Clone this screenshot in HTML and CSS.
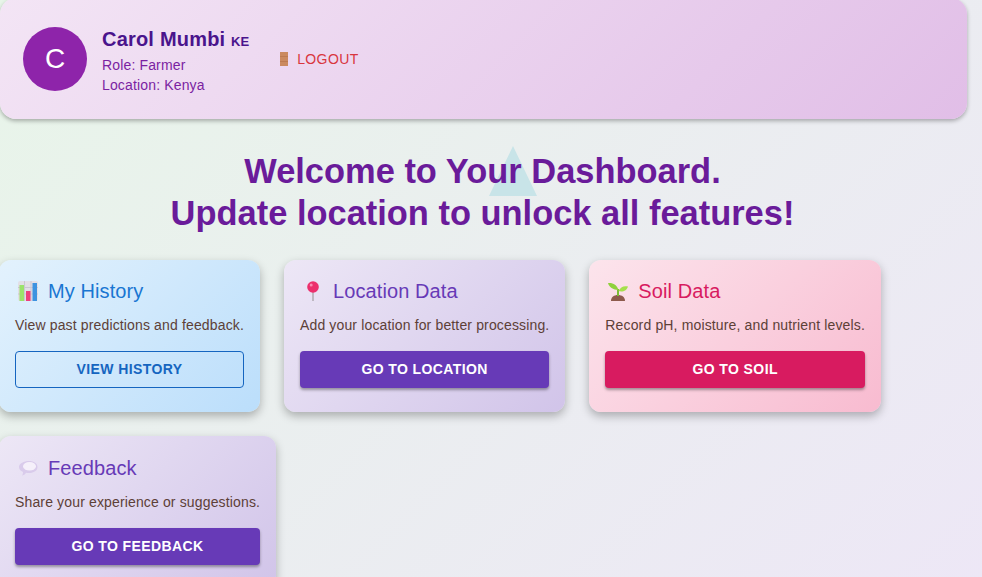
FILE: index.html
```html
<!DOCTYPE html>
<html lang="en">
<head>
  <meta charset="UTF-8">
  <meta name="viewport" content="width=device-width, initial-scale=1.0">
  <title>Dashboard</title>
  <link rel="stylesheet" href="styles.css">
</head>
<body>
<div class="page">
  <!-- Profilo utente -->
  <header class="profile">
    <div class="avatar">C</div>
    <div class="profile-info">
      <div class="profile-name">Carol Mumbi <span class="flag">KE</span></div>
      <div class="profile-meta">Role: Farmer</div>
      <div class="profile-meta">Location: Kenya</div>
    </div>
    <button class="logout">
      <svg class="door" viewBox="0 0 10 16" width="10" height="16" aria-hidden="true">
        <rect x="1" y="1" width="8" height="14" fill="#cb8a5f"/>
        <path d="M1 5.500h8M1 10.500h8" stroke="#bd7a50" stroke-width="1"/>
      </svg>
      Logout
    </button>
  </header>

  <main class="content">
    <div class="triangle"></div>
    <h1 class="title">Welcome to Your Dashboard.<br>Update location to unlock all features!</h1>

    <div class="cards">
      <section class="card card-blue">
        <h2 class="card-title">
          <svg class="emoji" viewBox="0 0 20 20" aria-hidden="true">
            <rect width="20" height="20" rx="2" fill="#e2dfe6"/>
            <path d="M0 6.500h20M0 13h20M6.500 0v20M13 0v20" stroke="#cbc7d2" stroke-width="1"/>
            <rect x="1.500" y="4" width="4.500" height="16" fill="#9be36b"/>
            <rect x="8" y="10" width="4.500" height="10" fill="#ee3f7c"/>
            <rect x="14.500" y="2" width="4.500" height="18" fill="#3d93e0"/>
          </svg>
          My History
        </h2>
        <p class="card-text">View past predictions and feedback.</p>
        <a class="btn btn-outline">View History</a>
      </section>

      <section class="card card-purple">
        <h2 class="card-title">
          <svg class="emoji" viewBox="0 0 20 20" aria-hidden="true">
            <rect x="9.200" y="8" width="1.600" height="12" fill="#b3adb5"/>
            <circle cx="10" cy="6" r="5.800" fill="#ec2f6c"/>
            <circle cx="8.200" cy="4" r="1.500" fill="#f98bb0"/>
          </svg>
          Location Data
        </h2>
        <p class="card-text">Add your location for better processing.</p>
        <a class="btn btn-purple">Go to Location</a>
      </section>

      <section class="card card-pink">
        <h2 class="card-title">
          <svg class="emoji" viewBox="0 0 20 20" aria-hidden="true">
            <path d="M3 20c0-4 3-6 7-6s7 2 7 6z" fill="#8d5a4c"/>
            <path d="M9 15V8h2v7z" fill="#7cbd35"/>
            <path d="M10.500 9C9 4 5 1.500 0 2c1 4 5 7 10.500 7z" fill="#8fd13c"/>
            <path d="M10.500 10c2-4 5-5.500 9.500-4.500-1 4-5.500 6-9.500 4.500z" fill="#a5e04c"/>
          </svg>
          Soil Data
        </h2>
        <p class="card-text">Record pH, moisture, and nutrient levels.</p>
        <a class="btn btn-pink">Go to Soil</a>
      </section>

      <section class="card card-purple">
        <h2 class="card-title">
          <svg class="emoji" viewBox="0 0 20 20" aria-hidden="true">
            <path d="M11 3c5 0 8.500 2.500 8.500 6s-3.500 6-8.500 6c-1 0-2 0-3-.300C7 16.500 5.500 17.500 4 17.500c.8-1 1-2 1-3.500C2.500 13 1 11 1 9c0-3.500 5-6 10-6z" fill="#d9cbeb"/>
            <ellipse cx="11.500" cy="8.300" rx="6.500" ry="4.300" fill="#f5f0fa"/>
          </svg>
          Feedback
        </h2>
        <p class="card-text">Share your experience or suggestions.</p>
        <a class="btn btn-purple">Go to Feedback</a>
      </section>
    </div>
  </main>
</div>
</body>
</html>
```

FILE: styles.css
```css
* {
  box-sizing: border-box;
}
html, body {
  margin: 0;
  padding: 0;
}
body {
  min-height: 577px;
  background: linear-gradient(135deg, #e8f5e9 0%, #ede7f6 100%);
  font-family: "Liberation Sans", Arial, sans-serif;
}
.page {
  width: 967px;
}
/* Profilo utente */
.profile {
  display: flex;
  align-items: center;
  height: 121px;
  margin-top: -2px;
  padding: 1px 23px 0;
  border-radius: 16px;
  background: linear-gradient(135deg, #f3e5f5 0%, #e1bee7 100%);
  box-shadow: 0 2px 4px rgba(0, 0, 0, 0.3);
}
.avatar {
  display: flex;
  align-items: center;
  justify-content: center;
  width: 64px;
  height: 64px;
  border-radius: 50%;
  background-color: #8e24aa;
  color: #fff;
  font-size: 28px;
}
.profile-info {
  margin-left: 15px;
  padding-top: 4px;
}
.profile-name {
  margin-bottom: 1px;
  color: #4a148c;
  font-size: 20px;
  font-weight: 700;
  letter-spacing: 0.2px;
  line-height: 24px;
}
.flag {
  font-size: 13px;
  letter-spacing: 0;
}
.profile-meta {
  color: #7b1fa2;
  font-size: 14px;
  letter-spacing: 0.15px;
  line-height: 20px;
}
.logout {
  display: flex;
  align-items: center;
  gap: 8px;
  margin-left: 30px;
  padding: 0;
  border: none;
  background: none;
  color: #d9363e;
  font-family: inherit;
  font-size: 14px;
  letter-spacing: 0.4px;
  text-transform: uppercase;
}
/* Contenuto */
.content {
  position: relative;
  padding-top: 31px;
}
.triangle {
  position: absolute;
  top: 27px;
  left: 489px;
  width: 48px;
  height: 50px;
  background-color: #c8e4e8;
  clip-path: polygon(50% 0, 100% 100%, 0 100%);
}
.title {
  position: relative;
  margin: 0 0 26px;
  padding-right: 2px;
  color: #6a1b9a;
  font-size: 34.450px;
  font-weight: 700;
  line-height: 42px;
  text-align: center;
}
.cards {
  display: flex;
  flex-wrap: wrap;
  gap: 24px;
}
.card {
  padding: 16px;
  height: 152px;
  border-radius: 12px;
  box-shadow: 0 4px 10px rgba(0, 0, 0, 0.28);
}
.card:first-child,
.card:last-child {
  margin-left: -1px;
}
.card:last-child {
  padding-top: 17px;
}
.card-blue {
  background: linear-gradient(135deg, #e3f2fd 0%, #bbdefb 100%);
}
.card-purple {
  background: linear-gradient(135deg, #ede7f6 0%, #d1c4e9 100%);
}
.card-pink {
  background: linear-gradient(135deg, #fce4ec 0%, #f8bbd0 100%);
}
.card-title {
  display: flex;
  align-items: center;
  gap: 10px;
  margin: 0 0 9px;
  padding-left: 3px;
  font-size: 20px;
  font-weight: 400;
  letter-spacing: 0.1px;
  line-height: 30px;
}
.card-blue .card-title {
  color: #1976d2;
}
.card-purple .card-title {
  color: #673ab7;
}
.card-pink .card-title {
  color: #d81b60;
}
.emoji {
  width: 20px;
  height: 20px;
}
.card-text {
  margin: 0 0 16px;
  color: #5d4037;
  font-size: 14px;
  letter-spacing: 0.145px;
  line-height: 20px;
  white-space: nowrap;
}
.btn {
  display: block;
  height: 37px;
  border-radius: 4px;
  font-size: 14px;
  font-weight: 700;
  letter-spacing: 0.4px;
  line-height: 37px;
  text-align: center;
  text-transform: uppercase;
}
.btn-outline {
  border: 1px solid #1565c0;
  color: #1565c0;
  line-height: 35px;
}
.btn-purple {
  background-color: #673ab7;
  color: #fff;
  box-shadow: 0 2px 3px rgba(0, 0, 0, 0.35);
}
.btn-pink {
  background-color: #d81b60;
  color: #fff;
  box-shadow: 0 2px 3px rgba(0, 0, 0, 0.35);
}
```
